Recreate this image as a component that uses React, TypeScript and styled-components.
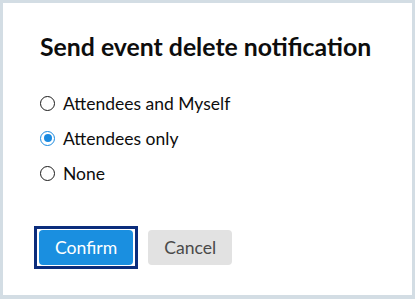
import React, { useState } from "react";
import styled, { createGlobalStyle } from "styled-components";

const GlobalStyle = createGlobalStyle`
  html, body {
    margin: 0;
    padding: 0;
    background-color: #d3dde4;
    font-family: Lato, "Open Sans", sans-serif;
  }
`;

const options = ["Attendees and Myself", "Attendees only", "None"];

function App() {
  const [choice, setChoice] = useState(1);

  return (
    <>
      <GlobalStyle />
      <Page>
        <Card>
          <Title>Send event delete notification</Title>
          <Options>
            {options.map((label, i) => (
              <Option key={label}>
                <Radio checked={choice === i} onClick={() => setChoice(i)} />
                <Label>{label}</Label>
              </Option>
            ))}
          </Options>
          <Actions>
            <Focus>
              <Button $primary>Confirm</Button>
            </Focus>
            <Button>Cancel</Button>
          </Actions>
        </Card>
      </Page>
    </>
  );
}

const Page = styled.div`
  width: 415px;
  height: 299px;
  padding: 3px 3px 4px 3px;
  box-sizing: border-box;
`;

const Card = styled.div`
  height: 100%;
  background-color: #ffffff;
  box-sizing: border-box;
  padding: 29px 0 0 37px;
  display: flex;
  flex-direction: column;
`;

const Title = styled.h1`
  margin: 0;
  font-size: 24.8px;
  font-weight: 700;
  color: #0d0d0d;
  line-height: 30px;
`;

const Options = styled.div`
  margin-top: 29px;
  display: flex;
  flex-direction: column;
  gap: 11px;
`;

const Option = styled.label`
  display: flex;
  align-items: center;
  gap: 8px;
  height: 24px;
  cursor: pointer;
`;

const Radio = styled.span<{ checked?: boolean }>`
  width: 15px;
  height: 15px;
  box-sizing: border-box;
  border-radius: 50%;
  border: 1.5px solid ${(p) => (p.checked ? "#1a8ae0" : "#1a1a1a")};
  display: flex;
  align-items: center;
  justify-content: center;
  flex-shrink: 0;

  &::after {
    content: "";
    width: 8px;
    height: 8px;
    border-radius: 50%;
    background-color: #1a8ae0;
    display: ${(p) => (p.checked ? "block" : "none")};
  }
`;

const Label = styled.span`
  font-size: 17.5px;
  color: #0d0d0d;
`;

const Actions = styled.div`
  margin-top: 41px;
  display: flex;
  align-items: center;
  gap: 10px;
  margin-left: -6px;
`;

const Focus = styled.div`
  border: 3px solid #0b2d7c;
  padding: 1px 2px;
  display: flex;
`;

const Button = styled.button<{ $primary?: boolean }>`
  height: 35px;
  padding: 0 16px;
  border: none;
  border-radius: 4px;
  font-family: Lato, "Open Sans", sans-serif;
  font-size: 17.6px;
  background-color: ${(p) => (p.$primary ? "#1a8fe0" : "#e2e2e2")};
  color: ${(p) => (p.$primary ? "#ffffff" : "#4a4a4a")};
  cursor: pointer;
`;

export default App;
